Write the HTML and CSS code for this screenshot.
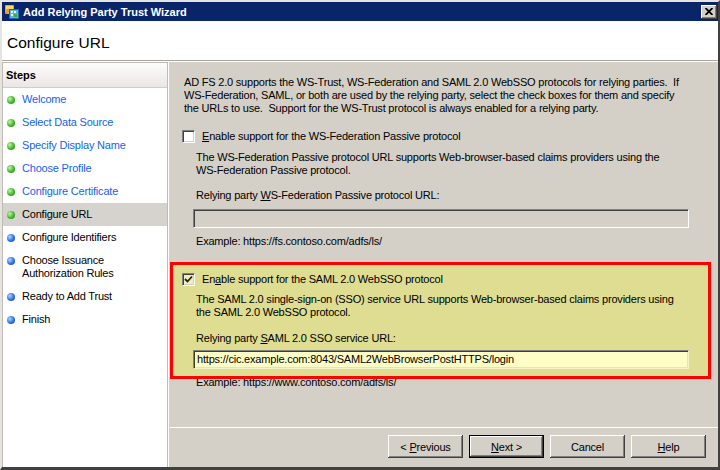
FILE: index.html
```html
<!DOCTYPE html>
<html lang="en">
<head>
    <meta charset="UTF-8">
    <title>Add Relying Party Trust Wizard</title>
    <link rel="stylesheet" href="styles.css">
</head>
<body>
    <div class="window">
        <div class="titlebar">
            <svg class="app-icon" width="16" height="16" viewBox="0 0 16 16">
                <rect x="1" y="1" width="9" height="9" rx="1" fill="#f0a020"/>
                <rect x="2" y="2" width="7" height="3" fill="#ffd860"/>
                <rect x="5" y="5" width="10" height="10" fill="#1c64c8"/>
                <rect x="6" y="6" width="8" height="8" fill="#5ab0f0"/>
                <rect x="7" y="7" width="2" height="2" fill="#e8f6ff"/>
                <rect x="10" y="7" width="2" height="2" fill="#e8f6ff"/>
                <rect x="7" y="10" width="2" height="2" fill="#e8f6ff"/>
                <rect x="10" y="10" width="3" height="3" fill="#38b030"/>
            </svg>
            <span class="title">Add Relying Party Trust Wizard</span>
            <div class="close-btn">
                <svg width="8" height="7" viewBox="0 0 8 7">
                    <path d="M0.5 0 L7.5 7 M7.5 0 L0.5 7" stroke="#000" stroke-width="1.8"/>
                </svg>
            </div>
        </div>

        <div class="page-header">Configure URL</div>

        <div class="wizard">
            <!-- Schritte links -->
            <div class="steps">
                <div class="steps-head">Steps</div>
                <ul class="step-list">
                    <li class="done"><span class="dot"></span><a href="#">Welcome</a></li>
                    <li class="done"><span class="dot"></span><a href="#">Select Data Source</a></li>
                    <li class="done"><span class="dot"></span><a href="#">Specify Display Name</a></li>
                    <li class="done"><span class="dot"></span><a href="#">Choose Profile</a></li>
                    <li class="done"><span class="dot"></span><a href="#">Configure Certificate</a></li>
                    <li class="done current"><span class="dot"></span><span>Configure URL</span></li>
                    <li class="todo"><span class="dot"></span><span>Configure Identifiers</span></li>
                    <li class="todo"><span class="dot"></span><span>Choose Issuance<br>Authorization Rules</span></li>
                    <li class="todo"><span class="dot"></span><span>Ready to Add Trust</span></li>
                    <li class="todo"><span class="dot"></span><span>Finish</span></li>
                </ul>
            </div>

            <div class="main">
                <div class="content">
                    <p class="intro">AD FS 2.0 supports the WS-Trust, WS-Federation and SAML 2.0 WebSSO protocols for relying parties.&nbsp; If<br>WS-Federation, SAML, or both are used by the relying party, select the check boxes for them and specify<br>the URLs to use.&nbsp; Support for the WS-Trust protocol is always enabled for a relying party.</p>

                    <div class="option">
                        <div class="check-row">
                            <span class="checkbox"></span>
                            <span><u>E</u>nable support for the WS-Federation Passive protocol</span>
                        </div>
                        <p class="desc">The WS-Federation Passive protocol URL supports Web-browser-based claims providers using the<br>WS-Federation Passive protocol.</p>
                        <p class="field-label">Relying party <u>W</u>S-Federation Passive protocol URL:</p>
                        <div class="textbox disabled"></div>
                    </div>
                    <p class="example">Example: https://fs.contoso.com/adfs/ls/</p>

                    <div class="option highlight">
                        <div class="check-row">
                            <span class="checkbox checked">
                                <svg width="9" height="9" viewBox="0 0 9 9">
                                    <path d="M1 4 L3.5 6.5 L8 1.5" fill="none" stroke="#222" stroke-width="1.8"/>
                                </svg>
                            </span>
                            <span>En<u>a</u>ble support for the SAML 2.0 WebSSO protocol</span>
                        </div>
                        <p class="desc">The SAML 2.0 single-sign-on (SSO) service URL supports Web-browser-based claims providers using<br>the SAML 2.0 WebSSO protocol.</p>
                        <p class="field-label">Relying party <u>S</u>AML 2.0 SSO service URL:</p>
                        <div class="textbox filled">https://cic.example.com:8043/SAML2WebBrowserPostHTTPS/login</div>
                    </div>
                    <p class="example example-last">Example: https://www.contoso.com/adfs/ls/</p>
                </div>

                <div class="buttons">
                    <button>&lt; <u>P</u>revious</button>
                    <button class="default"><u>N</u>ext &gt;</button>
                    <button>Cancel</button>
                    <button><u>H</u>elp</button>
                </div>
            </div>
        </div>
    </div>
</body>
</html>
```

FILE: styles.css
```css
body {
    margin: 0;
    padding: 0;
    font-family: "Liberation Sans", Arial, sans-serif;
    font-size: 11px;
    letter-spacing: -0.2px;
    background-color: #d4d0c8;
}

p {
    margin: 0;
}

.window {
    width: 720px;
    height: 470px;
    box-sizing: border-box;
    background-color: #d4d0c8;
    border-top: 2px solid #e6e4df;
    border-left: 2px solid #e6e4df;
    border-right: 2px solid #404040;
    border-bottom: 3px solid #404040;
    display: flex;
    flex-direction: column;
}

.titlebar {
    height: 19px;
    background-color: #0a246a;
    display: flex;
    align-items: center;
    padding-left: 2px;
    padding-right: 1px;
}

.app-icon {
    margin-right: 3px;
}

.title {
    color: white;
    font-weight: bold;
    letter-spacing: 0;
    flex: 1;
}

.close-btn {
    width: 16px;
    height: 14px;
    box-sizing: border-box;
    background-color: #d4d0c8;
    box-shadow: inset -1px -1px #404040, inset 1px 1px #fff, inset -2px -2px #808080;
    display: flex;
    align-items: center;
    justify-content: center;
}

.page-header {
    height: 40px;
    box-sizing: border-box;
    background-color: white;
    padding: 13px 0 0 5px;
    font-size: 15.5px;
    line-height: 18px;
    letter-spacing: 0;
    border-bottom: 1px solid #a8a5a0;
    margin-bottom: 1px;
    box-shadow: 0 1px 0 #fff;
}

.wizard {
    flex: 1;
    display: flex;
}

/* Schrittliste */
.steps {
    width: 166px;
    box-sizing: border-box;
    background-color: white;
    border: 1px solid #bfbcb6;
    border-bottom: none;
    margin-right: 2px;
    box-shadow: 1px 0 0 #fff;
}

.steps-head {
    height: 24px;
    line-height: 24px;
    padding-left: 3px;
    font-weight: bold;
    letter-spacing: 0;
    background: linear-gradient(#fdfcfc, #ece6e6);
    border-bottom: 1px solid #d2cdcb;
}

.step-list {
    list-style: none;
    margin: 0;
    padding: 0;
}

.step-list li {
    display: flex;
    align-items: flex-start;
    padding: 5px 0 5px 4px;
    line-height: 13px;
}

.step-list li.current {
    background-color: #d6d3ce;
}

.step-list a {
    color: #1463f0;
    text-decoration: none;
}

.dot {
    width: 8px;
    height: 8px;
    border-radius: 50%;
    margin: 3px 7px 0 0;
    flex-shrink: 0;
}

.done .dot {
    background: radial-gradient(circle at 35% 35%, #c4f4a8, #40b82a 55%, #23801a);
}

.todo .dot {
    background: radial-gradient(circle at 35% 35%, #b0d4ff, #2c72ea 55%, #1444a8);
}

/* rechter Bereich */
.main {
    flex: 1;
    display: flex;
    flex-direction: column;
}

.content {
    flex: 1;
    padding: 14px 0 0 12px;
    line-height: 13px;
}

.intro {
    margin-left: 2px;
    white-space: nowrap;
}

.option {
    margin-top: 15px;
}

.check-row {
    display: flex;
    align-items: center;
    height: 13px;
}

.checkbox {
    width: 13px;
    height: 13px;
    box-sizing: border-box;
    background-color: white;
    border-top: 1px solid #808080;
    border-left: 1px solid #808080;
    border-right: 1px solid #fff;
    border-bottom: 1px solid #fff;
    box-shadow: inset 1px 1px #404040, inset -1px -1px #d4d0c8;
    margin-right: 7px;
    display: flex;
    align-items: center;
    justify-content: center;
}

.checkbox.checked {
    background-color: #efeebc;
}

.desc {
    margin: 8px 0 0 14px;
    white-space: nowrap;
}

.field-label {
    margin: 12px 0 0 14px;
}

.textbox {
    width: 496px;
    height: 19px;
    box-sizing: border-box;
    margin: 7px 0 0 11px;
    border-top: 1px solid #808080;
    border-left: 1px solid #808080;
    border-right: 1px solid #fff;
    border-bottom: 1px solid #fff;
    box-shadow: inset 1px 1px #404040, inset -1px -1px #d4d0c8;
    padding: 2px 0 0 3px;
}

.textbox.disabled {
    background-color: #d4d0c8;
}

.textbox.filled {
    background-color: #fdfdc6;
    border-right-color: #f4f3c8;
    border-bottom-color: #f4f3c8;
    box-shadow: inset 1px 1px #404020, inset -1px -1px #e6e5b0;
}

.example {
    margin: 7px 0 0 14px;
}

/* markierter Bereich */
.highlight {
    position: relative;
    z-index: 1;
    width: 541px;
    box-sizing: border-box;
    margin: 14px 0 0 -12px;
    padding: 8px 0 7px 9px;
    border: 3px solid #ff0000;
    background-color: #dedd91;
}

.highlight .desc {
    margin-top: 7px;
}

.highlight .field-label {
    margin-top: 13px;
}

.highlight .textbox {
    margin-top: 5px;
}

.example-last {
    margin-top: -3px;
}

.buttons {
    height: 40px;
    box-sizing: border-box;
    border-top: 1px solid #fff;
    display: flex;
    justify-content: flex-end;
    gap: 6px;
    padding: 7px 12px 0 0;
}

.buttons button {
    width: 75px;
    height: 23px;
    font-family: "Liberation Sans", Arial, sans-serif;
    font-size: 11px;
    letter-spacing: -0.2px;
    color: black;
    background-color: #d4d0c8;
    border: none;
    padding: 0;
    box-shadow: inset -1px -1px #404040, inset 1px 1px #fff, inset -2px -2px #808080;
}

.buttons button.default {
    border: 1px solid #000;
}
```
